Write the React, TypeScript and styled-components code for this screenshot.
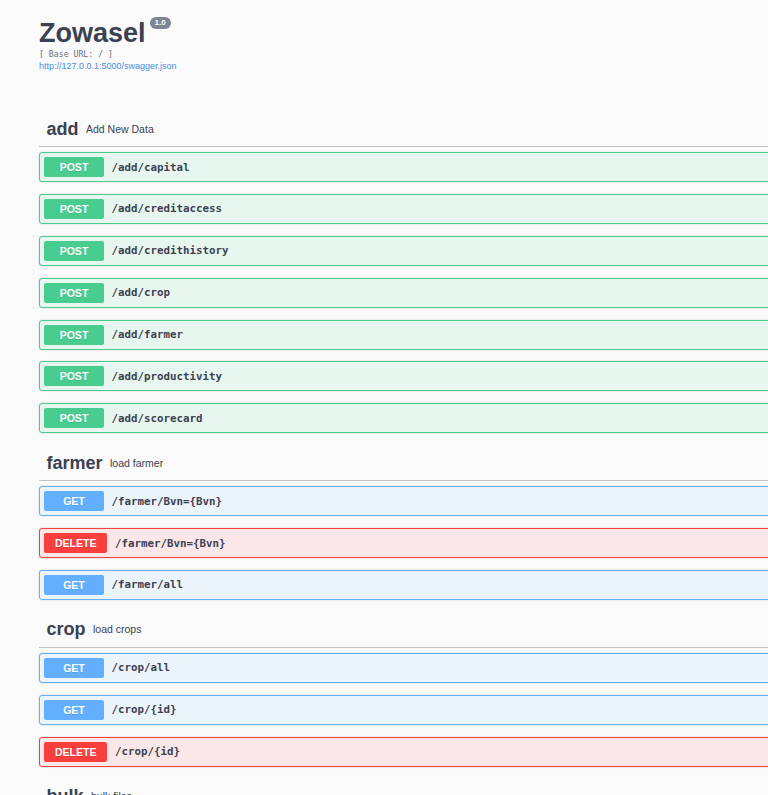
import React from "react";
import styled, { createGlobalStyle } from "styled-components";

const GlobalStyle = createGlobalStyle`
  html, body {
    margin: 0;
    padding: 0;
    background: #fafafa;
    overflow: hidden;
  }
  body {
    font-family: "Liberation Sans", Arial, sans-serif;
    color: #3b4151;
  }
`;

type Method = "get" | "post" | "delete";

const methodColors: Record<Method, { main: string; bg: string }> = {
  post: { main: "#49cc90", bg: "#e8f6f0" },
  get: { main: "#61affe", bg: "#ebf3fb" },
  delete: { main: "#f93e3e", bg: "#fbe7e7" },
};

const Wrapper = styled.div`
  width: 1100px;
  padding: 0 0 0 39px;
`;

const Info = styled.div`
  padding-top: 18px;
  margin-bottom: 39px;
`;

const Title = styled.h2`
  display: flex;
  align-items: flex-start;
  margin: 0;
  font-size: 27px;
  line-height: 31px;
  font-weight: 700;
  color: #3b4151;
`;

const Version = styled.span`
  margin: -1px 0 0 4px;
  padding: 2px 5px;
  border-radius: 40px;
  background: #7d8492;
  color: #fff;
  font-size: 8px;
  line-height: 8px;
  font-weight: 700;
`;

const BaseUrl = styled.pre`
  margin: 0;
  font-family: "DejaVu Sans Mono", monospace;
  font-size: 8.2px;
  line-height: 11px;
  color: #6b6f78;
`;

const SpecLink = styled.a`
  display: block;
  font-size: 9px;
  line-height: 12px;
  color: #4990e2;
  text-decoration: none;
`;

const TagSection = styled.section``;

const TagHeader = styled.h3`
  display: flex;
  align-items: center;
  margin: 0 0 5px;
  padding: 7.5px 15px 7.5px 7.5px;
  border-bottom: 1px solid rgba(59, 65, 81, 0.3);
`;

const TagName = styled.span`
  font-size: 18px;
  line-height: 20px;
  font-weight: 700;
  color: #3b4151;
`;

const TagDescription = styled.small`
  margin-left: 7.5px;
  font-size: 10.5px;
  font-weight: 400;
  color: #3b4151;
`;

const OpBlock = styled.div<{ $method: Method }>`
  display: flex;
  align-items: center;
  box-sizing: border-box;
  height: 30px;
  margin-bottom: 11.875px;
  padding: 0 4px;
  border: 1px solid ${(p) => methodColors[p.$method].main};
  border-radius: 3px;
  background: ${(p) => methodColors[p.$method].bg};
  box-shadow: 0 0 2px rgba(0, 0, 0, 0.19);
`;

const MethodBadge = styled.span<{ $method: Method }>`
  display: flex;
  align-items: center;
  justify-content: center;
  box-sizing: border-box;
  min-width: 60px;
  height: 20px;
  padding: 0 11px;
  border-radius: 2px;
  background: ${(p) => methodColors[p.$method].main};
  color: #fff;
  font-size: 10.5px;
  font-weight: 700;
  text-shadow: 0 1px 0 rgba(0, 0, 0, 0.1);
`;

const Path = styled.span`
  padding: 0 7.5px;
  font-family: "DejaVu Sans Mono", monospace;
  font-size: 10.8px;
  font-weight: 700;
  color: #3b4151;
`;

type Op = { method: Method; path: string };
type Tag = { name: string; description: string; ops: Op[] };

const tags: Tag[] = [
  {
    name: "add",
    description: "Add New Data",
    ops: [
      { method: "post", path: "/add/capital" },
      { method: "post", path: "/add/creditaccess" },
      { method: "post", path: "/add/credithistory" },
      { method: "post", path: "/add/crop" },
      { method: "post", path: "/add/farmer" },
      { method: "post", path: "/add/productivity" },
      { method: "post", path: "/add/scorecard" },
    ],
  },
  {
    name: "farmer",
    description: "load farmer",
    ops: [
      { method: "get", path: "/farmer/Bvn={Bvn}" },
      { method: "delete", path: "/farmer/Bvn={Bvn}" },
      { method: "get", path: "/farmer/all" },
    ],
  },
  {
    name: "crop",
    description: "load crops",
    ops: [
      { method: "get", path: "/crop/all" },
      { method: "get", path: "/crop/{id}" },
      { method: "delete", path: "/crop/{id}" },
    ],
  },
  {
    name: "bulk",
    description: "bulk files",
    ops: [{ method: "post", path: "/bulk/upload" }],
  },
];

const App = () => (
  <>
    <GlobalStyle />
    <Wrapper>
      <Info>
        <Title>
          <span>Zowasel</span>
          <Version>1.0</Version>
        </Title>
        <BaseUrl>[ Base URL: / ]</BaseUrl>
        <SpecLink href="#">http://127.0.0.1:5000/swagger.json</SpecLink>
      </Info>
      {tags.map((t) => (
        <TagSection key={t.name}>
          <TagHeader>
            <TagName>{t.name}</TagName>
            <TagDescription>{t.description}</TagDescription>
          </TagHeader>
          {t.ops.map((o) => (
            <OpBlock key={o.method + o.path} $method={o.method}>
              <MethodBadge $method={o.method}>{o.method.toUpperCase()}</MethodBadge>
              <Path>{o.path}</Path>
            </OpBlock>
          ))}
        </TagSection>
      ))}
    </Wrapper>
  </>
);

export default App;
